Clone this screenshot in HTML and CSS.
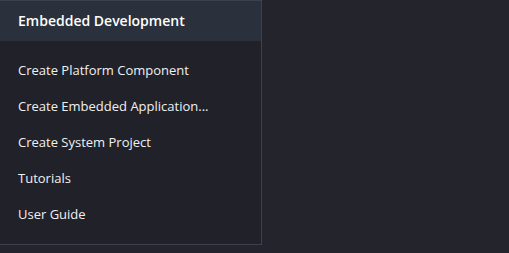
FILE: index.html
```html
<!DOCTYPE html>
<html>
<head>
    <meta name="viewport" content="width=device-width, initial-scale=1.0">
    <link rel="stylesheet" href="styles.css">
</head>
<body>
    <div class="panel">
        <div class="panel-header">Embedded Development</div>
        <ul class="menu">
            <li>Create Platform Component</li>
            <li>Create Embedded Application...</li>
            <li>Create System Project</li>
            <li>Tutorials</li>
            <li>User Guide</li>
        </ul>
    </div>
</body>
</html>
```

FILE: styles.css
```css
body {
    margin: 0;
    padding: 0;
    background-color: #24242d;
    color: #f0f0f0;
    font-family: "Open Sans", Arial, sans-serif;
    font-size: 13px;
}

.panel {
    width: 261px;
    background-color: #21212a;
    border-top: 1px solid #3b414d;
    border-right: 1px solid #3b414d;
    border-bottom: 1px solid #3b414d;
}

.panel-header {
    height: 40px;
    line-height: 40px;
    padding-left: 18px;
    background-color: #2a303c;
    font-size: 14px;
    font-weight: 600;
    color: #ffffff;
}

.menu {
    list-style: none;
    margin: 0;
    padding: 12px 0 11px;
}

.menu li {
    height: 36px;
    line-height: 35px;
    padding-left: 18px;
}
```
